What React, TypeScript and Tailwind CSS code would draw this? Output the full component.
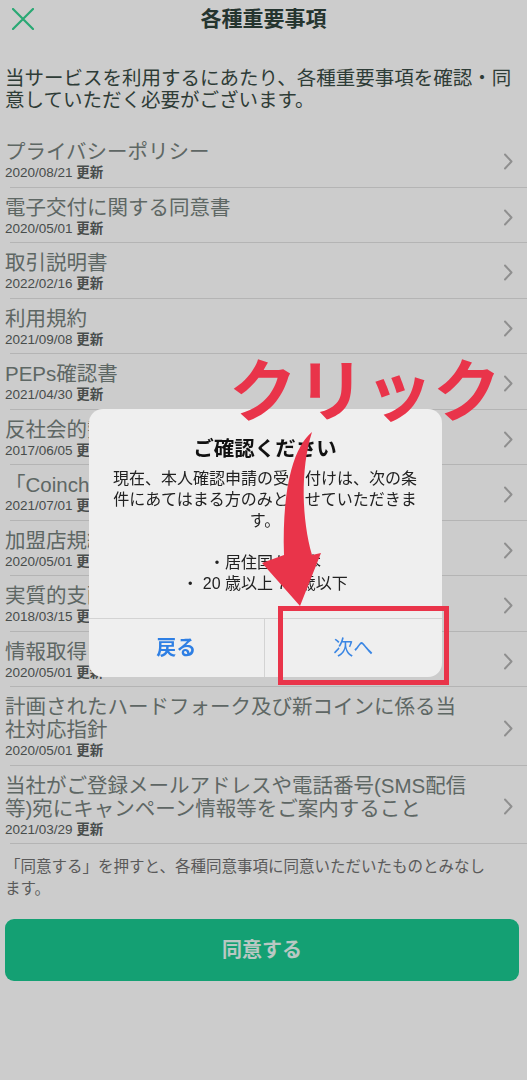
import React from "react";

type Doc = { title: string[]; date: string };

const docs: Doc[] = [
  { title: ["プライバシーポリシー"], date: "2020/08/21" },
  { title: ["電子交付に関する同意書"], date: "2020/05/01" },
  { title: ["取引説明書"], date: "2022/02/16" },
  { title: ["利用規約"], date: "2021/09/08" },
  { title: ["PEPs確認書"], date: "2021/04/30" },
  { title: ["反社会的勢力でないことの表明・確約"], date: "2017/06/05" },
  { title: ["「Coincheckつみたて」に関する同意書"], date: "2021/07/01" },
  { title: ["加盟店規約"], date: "2020/05/01" },
  { title: ["実質的支配者に関する申告書"], date: "2018/03/15" },
  { title: ["情報取得に関する同意書"], date: "2020/05/01" },
  {
    title: ["計画されたハードフォーク及び新コインに係る当", "社対応指針"],
    date: "2020/05/01",
  },
  {
    title: ["当社がご登録メールアドレスや電話番号(SMS配信", "等)宛にキャンペーン情報等をご案内すること"],
    date: "2021/03/29",
  },
];

const Chevron = () => (
  <svg width="9" height="17" viewBox="0 0 9 17" fill="none" className="shrink-0">
    <path d="M1 1.5 L7.5 8.5 L1 15.5" stroke="#b3b3b3" strokeWidth="2" strokeLinecap="round" strokeLinejoin="round" />
  </svg>
);

const DocRow = ({ doc }: { doc: Doc }) => (
  <li className="ml-[10px] border-b border-[#e2e2e2]">
    <div className="-ml-[5px] flex items-center pr-[14px] pt-[8px] pb-[3.5px]">
      <div className="flex-1 min-w-0">
        {doc.title.map((line) => (
          <div key={line} className="whitespace-nowrap text-[20.5px] leading-[23px] text-[#76817d]">
            {line}
          </div>
        ))}
        <div className="text-[13.5px] leading-[20px] text-[#5a615e]">
          {doc.date} <span className="font-bold">更新</span>
        </div>
      </div>
      <Chevron />
    </div>
  </li>
);

export default function App() {
  return (
    <div className="relative min-h-screen bg-white font-['Liberation_Sans','Noto_Sans_CJK_JP',sans-serif]">
      {/* header */}
      <header className="grid h-[36px] grid-cols-[48px_1fr_48px] items-center">
        <div className="pl-[12px] pt-[1px]">
          <svg width="22" height="22" viewBox="0 0 22 22" fill="none">
            <path d="M1 1 L21 21 M21 1 L1 21" stroke="#34d291" strokeWidth="2.2" strokeLinecap="round" />
          </svg>
        </div>
        <h1 className="text-center text-[21px] font-bold leading-none text-[#2f433b]">各種重要事項</h1>
        <div />
      </header>

      <p className="mt-[31px] px-[5px] text-[19.5px] leading-[22px] text-[#3a4c45]">
        当サービスを利用するにあたり、各種重要事項を確認・同意していただく必要がございます。
      </p>

      <ul className="mt-[21px]">
        {docs.map((d) => (
          <DocRow key={d.title[0]} doc={d} />
        ))}
      </ul>

      <p className="mt-[12px] px-[5px] text-[15.5px] leading-[21.5px] text-[#717171]">
        <span className="block whitespace-nowrap">「同意する」を押すと、各種同意事項に同意いただいたものとみなし</span>
        <span className="block">ます。</span>
      </p>

      <div className="ml-[5px] mr-[8px] mt-[20px]">
        <button className="flex h-[62px] w-full items-center justify-center rounded-[9px] bg-[#19c890] text-[20px] font-bold text-white/90">
          同意する
        </button>
      </div>

      {/* dim + alert */}
      <div className="fixed inset-0 z-10 flex items-center justify-center bg-black/20 pl-[3px] pt-[6px]">
        <div className="w-[353px] overflow-hidden rounded-[14px] bg-[#efefef]">
          <div className="px-[16px] pt-[27px] pb-[24.5px] text-center">
            <h2 className="text-[20.5px] font-bold leading-[26px] text-[#111111]">ご確認ください</h2>
            <div className="mt-[5.5px] text-[16px] leading-[21px] text-[#222222]">
              <p className="whitespace-nowrap">現在、本人確認申請の受け付けは、次の条</p>
              <p className="whitespace-nowrap">件にあてはまる方のみとさせていただきま</p>
              <p>す。</p>
              <p>&nbsp;</p>
              <p>・居住国が日本</p>
              <p>・ 20 歳以上 75 歳以下</p>
            </div>
          </div>
          <div className="grid h-[59px] grid-cols-2 border-t border-[#d3d3d3]">
            <button className="border-r border-[#d3d3d3] text-[20px] font-bold text-[#2e7fe4]">戻る</button>
            <button className="text-[20px] text-[#3a86e4]">次へ</button>
          </div>
        </div>
      </div>

      {/* red annotation */}
      <div className="pointer-events-none absolute left-[229px] top-[358px] z-20 whitespace-nowrap text-[68px] font-bold leading-none text-[#e9344a]">
        クリック
      </div>
      <svg className="pointer-events-none absolute left-0 top-0 z-20" width="527" height="700" viewBox="0 0 527 700">
        <path
          d="M312 432 C296 445 282 480 284 555 L262 563 L300 606 L321 553 L312 555 C302 520 300 470 312 432 Z"
          fill="#e9344a"
        />
      </svg>
      <div className="pointer-events-none absolute left-[278px] top-[606px] z-20 h-[79px] w-[171px] border-[5px] border-[#e9344a]" />
    </div>
  );
}
